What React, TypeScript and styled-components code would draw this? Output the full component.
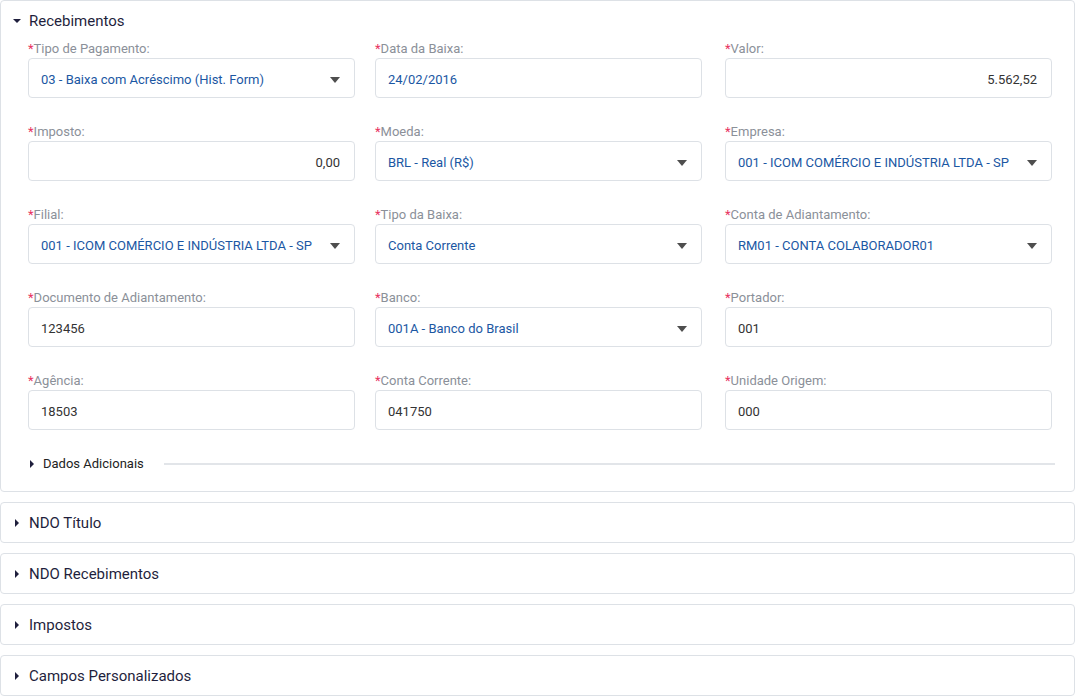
import React from "react";
import styled, { createGlobalStyle } from "styled-components";

const GlobalStyle = createGlobalStyle`
  * { box-sizing: border-box; }
  body {
    margin: 0;
    background: #fff;
    font-family: Roboto, "Liberation Sans", sans-serif;
  }
`;

const Panel = styled.section<{ $open?: boolean }>`
  border: 1px solid #dde1e6;
  border-radius: 4px;
  background: #fff;
  height: ${(p) => (p.$open ? "492px" : "41px")};
  margin-bottom: 10px;
`;

const PanelHeader = styled.div`
  height: 39px;
  display: flex;
  align-items: center;
  gap: 8px;
  padding-left: 12px;
  font-size: 15px;
  color: #1f1f3d;
`;

const CaretBox = styled.span<{ $w: number }>`
  width: ${(p) => p.$w}px;
  display: flex;
  justify-content: center;
  align-items: center;
`;

const Caret = styled.span<{ $dir: "down" | "right" }>`
  display: inline-block;
  width: 0;
  height: 0;
  ${(p) =>
    p.$dir === "down"
      ? `border-left: 4px solid transparent; border-right: 4px solid transparent; border-top: 4px solid #1f1f3d;`
      : `border-top: 4px solid transparent; border-bottom: 4px solid transparent; border-left: 4px solid #1f1f3d;`}
`;

const Grid = styled.div`
  display: grid;
  grid-template-columns: 327px 327px 330px;
  column-gap: 20px;
  row-gap: 26px;
  padding: 1px 0 0 27px;
`;

const Field = styled.div`
  display: flex;
  flex-direction: column;
  gap: 2px;

  &:nth-child(3n) {
    padding-left: 3px;
  }
`;

const Label = styled.label`
  font-size: 13px;
  line-height: 15px;
  color: #8b9099;
`;

const Req = styled.span`
  color: #e8355f;
`;

const Box = styled.div<{ $align?: "right"; $tone?: "blue" | "dark" }>`
  height: 40px;
  border: 1px solid #dde1e6;
  border-radius: 4px;
  display: flex;
  align-items: center;
  justify-content: ${(p) => (p.$align === "right" ? "flex-end" : "space-between")};
  padding: 3px 14px 0 12px;
  font-size: 13px;
  color: ${(p) => (p.$tone === "blue" ? "#1b57a3" : "#333")};
`;

const SelectArrow = styled.span`
  width: 0;
  height: 0;
  border-left: 5px solid transparent;
  border-right: 5px solid transparent;
  border-top: 6px solid #4e4e4e;
  margin-right: 0;
`;

const Extra = styled.div`
  display: flex;
  align-items: center;
  padding: 26px 19px 0 28px;
  font-size: 13px;
  color: #222;
`;

const ExtraToggle = styled.div`
  display: flex;
  align-items: center;
  gap: 8px;
  margin-right: 20px;
`;

const Rule = styled.div`
  flex: 1;
  height: 2px;
  background: #e2e5e9;
`;

type F = {
  label: string;
  value: string;
  select?: boolean;
  right?: boolean;
  blue?: boolean;
};

const fields: F[] = [
  { label: "Tipo de Pagamento:", value: "03 - Baixa com Acréscimo (Hist. Form)", select: true, blue: true },
  { label: "Data da Baixa:", value: "24/02/2016", blue: true },
  { label: "Valor:", value: "5.562,52", right: true },
  { label: "Imposto:", value: "0,00", right: true },
  { label: "Moeda:", value: "BRL - Real (R$)", select: true, blue: true },
  { label: "Empresa:", value: "001 - ICOM COMÉRCIO E INDÚSTRIA LTDA - SP", select: true, blue: true },
  { label: "Filial:", value: "001 - ICOM COMÉRCIO E INDÚSTRIA LTDA - SP", select: true, blue: true },
  { label: "Tipo da Baixa:", value: "Conta Corrente", select: true, blue: true },
  { label: "Conta de Adiantamento:", value: "RM01 - CONTA COLABORADOR01", select: true, blue: true },
  { label: "Documento de Adiantamento:", value: "123456" },
  { label: "Banco:", value: "001A - Banco do Brasil", select: true, blue: true },
  { label: "Portador:", value: "001" },
  { label: "Agência:", value: "18503" },
  { label: "Conta Corrente:", value: "041750" },
  { label: "Unidade Origem:", value: "000" },
];

const collapsed = ["NDO Título", "NDO Recebimentos", "Impostos", "Campos Personalizados"];

export default function App() {
  return (
    <>
      <GlobalStyle />
      <Panel $open>
        <PanelHeader>
          <CaretBox $w={8}>
            <Caret $dir="down" />
          </CaretBox>
          Recebimentos
        </PanelHeader>
        <Grid>
          {fields.map((f) => (
            <Field key={f.label}>
              <Label>
                <Req>*</Req>
                {f.label}
              </Label>
              <Box $align={f.right ? "right" : undefined} $tone={f.blue ? "blue" : "dark"}>
                <span>{f.value}</span>
                {f.select && <SelectArrow />}
              </Box>
            </Field>
          ))}
        </Grid>
        <Extra>
          <ExtraToggle>
            <CaretBox $w={6}>
              <Caret $dir="right" />
            </CaretBox>
            Dados Adicionais
          </ExtraToggle>
          <Rule />
        </Extra>
      </Panel>
      {collapsed.map((t) => (
        <Panel key={t}>
          <PanelHeader>
            <CaretBox $w={8}>
              <Caret $dir="right" />
            </CaretBox>
            {t}
          </PanelHeader>
        </Panel>
      ))}
    </>
  );
}
